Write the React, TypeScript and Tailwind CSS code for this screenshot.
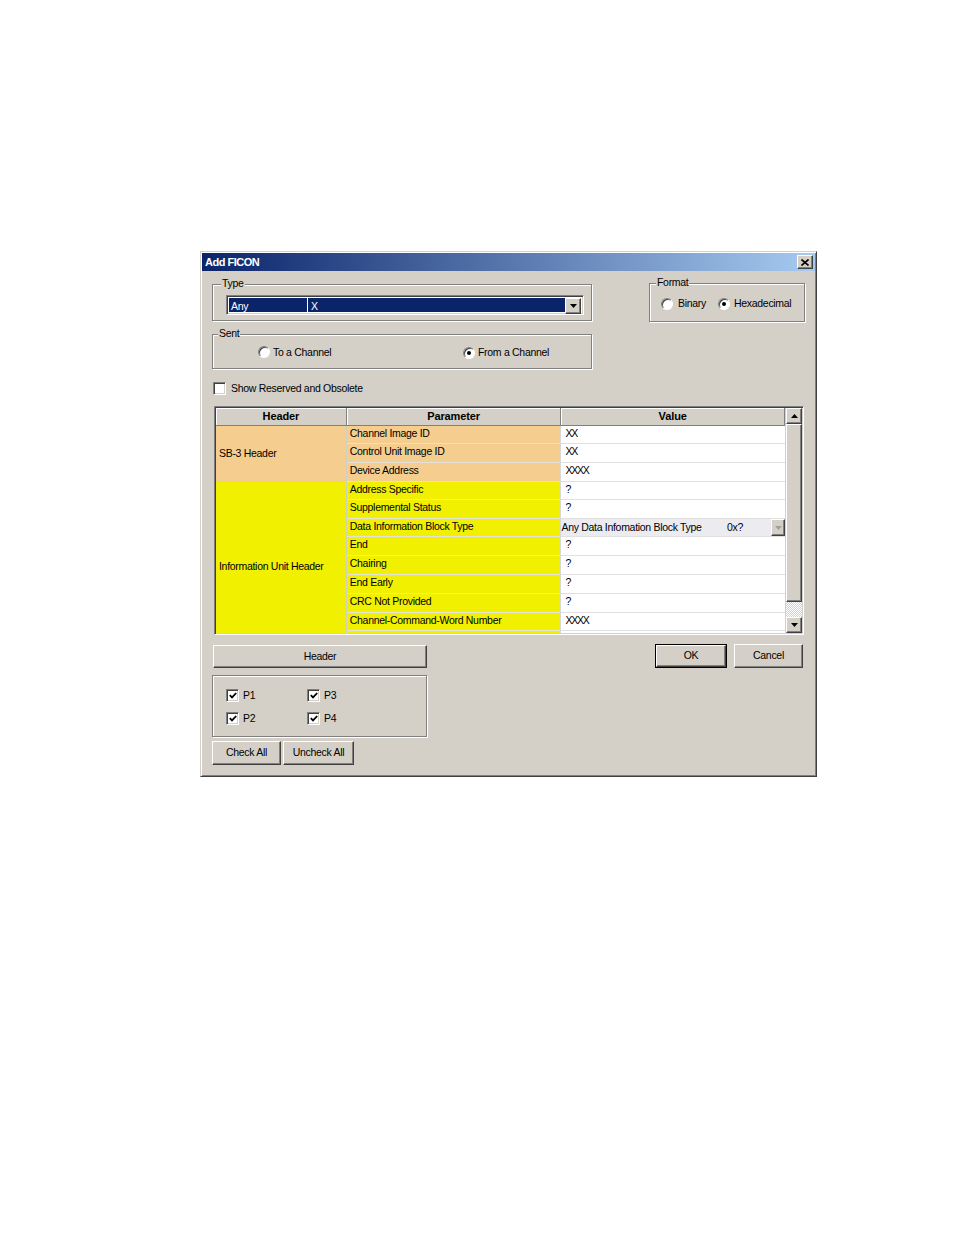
import React from "react";

const raised =
  "bg-[#d4d0c8] border border-t-white border-l-white border-r-[#404040] border-b-[#404040] shadow-[inset_-1px_-1px_0_#808080]";
const sunken =
  "border border-t-[#808080] border-l-[#808080] border-r-white border-b-white shadow-[inset_1px_1px_0_#404040,inset_-1px_-1px_0_#d4d0c8]";
const etched = "border border-[#808080] shadow-[inset_1px_1px_0_#fff,1px_1px_0_#fff]";

const ORANGE = "bg-[#f5ce8f]";
const YELLOW = "bg-[#f0f000]";

function DownArrow({ color = "#000" }: { color?: string }) {
  return (
    <svg width="7" height="4" viewBox="0 0 7 4">
      <polygon points="0,0 7,0 3.5,4" fill={color} />
    </svg>
  );
}
function UpArrow() {
  return (
    <svg width="7" height="4" viewBox="0 0 7 4">
      <polygon points="0,4 7,4 3.5,0" fill="#000" />
    </svg>
  );
}

function Check() {
  return (
    <svg width="8" height="7" viewBox="0 0 8 7">
      <polyline points="0.8,3.2 3,5.4 7.2,1" fill="none" stroke="#000" strokeWidth="1.8" />
    </svg>
  );
}

function CheckBox({ checked }: { checked?: boolean }) {
  return (
    <span className={`w-[13px] h-[13px] bg-white flex items-center justify-center shrink-0 ${sunken}`}>
      {checked ? <Check /> : null}
    </span>
  );
}

function Radio({ checked }: { checked?: boolean }) {
  return (
    <span
      className={`w-[12px] h-[12px] rounded-full bg-white flex items-center justify-center shrink-0 border border-t-[#808080] border-l-[#808080] border-r-white border-b-white shadow-[inset_1px_1px_0_#404040]`}
    >
      {checked ? <span className="w-[4px] h-[4px] rounded-full bg-black" /> : null}
    </span>
  );
}

function Legend({ children, className }: { children: React.ReactNode; className: string }) {
  return (
    <span className={`absolute -top-[9px] bg-[#d4d0c8] px-[1px] leading-[14px] ${className}`}>{children}</span>
  );
}

const rows: { p: string; v: string; h: string; c: string; combo?: boolean }[] = [
  { p: "Channel Image ID", v: "XX", h: "h-[18px]", c: ORANGE },
  { p: "Control Unit Image ID", v: "XX", h: "h-[19px]", c: ORANGE },
  { p: "Device Address", v: "XXXX", h: "h-[19px]", c: ORANGE },
  { p: "Address Specific", v: "?", h: "h-[18px]", c: YELLOW },
  { p: "Supplemental Status", v: "?", h: "h-[19px]", c: YELLOW },
  { p: "Data Information Block Type", v: "", h: "h-[18px]", c: YELLOW, combo: true },
  { p: "End", v: "?", h: "h-[19px]", c: YELLOW },
  { p: "Chairing", v: "?", h: "h-[19px]", c: YELLOW },
  { p: "End Early", v: "?", h: "h-[19px]", c: YELLOW },
  { p: "CRC Not Provided", v: "?", h: "h-[19px]", c: YELLOW },
  { p: "Channel-Command-Word Number", v: "XXXX", h: "h-[18px]", c: YELLOW },
];

export default function App() {
  return (
    <div className="w-[954px] h-[1235px] bg-white pt-[251px] pl-[200px] font-['Liberation_Sans',Arial,sans-serif] text-[10.5px] tracking-[-0.3px] text-black whitespace-nowrap">
      <div
        className="w-[617px] h-[526px] bg-[#d4d0c8] p-[1px] border border-t-[#d4d0c8] border-l-[#d4d0c8] border-r-[#404040] border-b-[#404040] shadow-[inset_1px_1px_0_#fff,inset_-1px_-1px_0_#808080] flex flex-col"
      >
        {/* Title bar */}
        <div className="h-[18px] flex items-center bg-[linear-gradient(to_right,#0a246a,#a6caf0)] pl-[3px] pr-[2px]">
          <span className="text-white font-bold text-[11px] tracking-[-0.5px] leading-none">Add FICON</span>
          <span className={`ml-auto w-[16px] h-[14px] flex items-center justify-center ${raised}`}>
            <svg width="8" height="7" viewBox="0 0 8 7">
              <path d="M0.5 0.5 L7.5 6.5 M7.5 0.5 L0.5 6.5" stroke="#000" strokeWidth="1.6" />
            </svg>
          </span>
        </div>

        {/* Top groups */}
        <div className="flex">
          <div className="ml-[10px] w-[380px] shrink-0">
            <div className={`relative mt-[13px] h-[37px] ${etched}`}>
              <Legend className="left-[8px]">Type</Legend>
              <div className={`ml-[13px] mt-[10px] w-[358px] h-[20px] bg-white flex p-[2px] ${sunken}`}>
                <div className="flex-1 flex bg-[#0a246a] text-white leading-[16px]">
                  <span className="w-[79px] pl-[2px] border-r border-white">Any</span>
                  <span className="pl-[3px]">X</span>
                </div>
                <span className={`w-[16px] h-[16px] flex items-center justify-center ${raised}`}>
                  <DownArrow />
                </span>
              </div>
            </div>
            <div className={`relative mt-[13px] h-[35px] ${etched}`}>
              <Legend className="left-[5px]">Sent</Legend>
              <div className="flex items-center mt-[9px]">
                <span className="ml-[45px] w-[205px] shrink-0 flex items-center gap-[3px]">
                  <Radio />
                  <span>To a Channel</span>
                </span>
                <span className="shrink-0 flex items-center gap-[3px] mt-[1px]">
                  <Radio checked />
                  <span>From a Channel</span>
                </span>
              </div>
            </div>
          </div>
          <div className={`relative ml-[57px] mt-[12px] w-[156px] h-[39px] shrink-0 ${etched}`}>
            <Legend className="left-[6px]">Format</Legend>
            <div className="flex items-center mt-[12px]">
              <span className="ml-[11px] w-[57px] shrink-0 flex items-center gap-[5px]">
                <Radio />
                <span>Binary</span>
              </span>
              <span className="shrink-0 flex items-center gap-[4px]">
                <Radio checked />
                <span>Hexadecimal</span>
              </span>
            </div>
          </div>
        </div>

        {/* Show reserved */}
        <div className="mt-[13px] ml-[11px] flex items-center gap-[5px] h-[13px]">
          <CheckBox />
          <span>Show Reserved and Obsolete</span>
        </div>

        {/* Table */}
        <div className={`mt-[11px] ml-[12px] w-[590px] h-[229px] bg-[#d4d0c8] flex p-[1px] ${sunken}`}>
          <div className="w-[571px] flex flex-col overflow-hidden">
            {/* header row */}
            <div className="h-[18px] flex font-bold text-[11px] tracking-[-0.1px]">
              <div className="w-[131px] flex items-center justify-center pb-[1px] border-r border-b border-[#808080] shadow-[inset_1px_1px_0_#fff]">
                Header
              </div>
              <div className="w-[215px] flex items-center justify-center pb-[1px] border-r border-b border-[#808080] shadow-[inset_1px_1px_0_#fff]">
                Parameter
              </div>
              <div className="w-[224px] flex items-center justify-center pb-[1px] border-r border-b border-[#808080] shadow-[inset_1px_1px_0_#fff]">
                Value
              </div>
            </div>
            {/* body */}
            <div className="flex flex-1 bg-white">
              <div className="w-[131px] flex flex-col border-r border-[#d0d0c0]">
                <div className={`h-[56px] flex items-center pl-[3px] ${ORANGE}`}>SB-3 Header</div>
                <div className={`flex-1 pl-[3px] pt-[77px] leading-[14px] ${YELLOW}`}>Information Unit Header</div>
              </div>
              <div className="w-[215px] flex flex-col border-r border-[#d8d8d8]">
                {rows.map((r) => (
                  <div key={r.p} className={`${r.h} ${r.c} flex items-center pl-[3px] pb-[2px] border-b border-[#e2e2d8]`}>
                    {r.p}
                  </div>
                ))}
                <div className={`flex-1 ${YELLOW}`} />
              </div>
              <div className="w-[224px] flex flex-col">
                {rows.map((r) =>
                  r.combo ? (
                    <div key={r.p} className={`${r.h} flex items-center bg-[#ecebf0] border-b border-[#e0e0e0]`}>
                      <span>Any Data Infomation Block Type</span>
                      <span className="ml-auto mr-[28px]">0x?</span>
                      <span className={`w-[14px] h-full flex items-center justify-center ${raised}`}>
                        <DownArrow color="#a0a0a0" />
                      </span>
                    </div>
                  ) : (
                    <div
                      key={r.p}
                      className={`${r.h} flex items-center pl-[4px] pb-[2px] border-b border-[#e0e0e0] ${r.v.startsWith("X") ? "tracking-[-1.2px]" : ""}`}
                    >
                      {r.v}
                    </div>
                  )
                )}
              </div>
            </div>
          </div>
          {/* scrollbar */}
          <div className="ml-[1px] w-[16px] flex flex-col">
            <span className={`h-[16px] flex items-center justify-center ${raised}`}>
              <UpArrow />
            </span>
            <span className={`h-[178px] ${raised}`} />
            <span className="flex-1 bg-[repeating-conic-gradient(#d4d0c8_0_25%,#fff_0_50%)] bg-[length:2px_2px]" />
            <span className={`h-[16px] flex items-center justify-center ${raised}`}>
              <DownArrow />
            </span>
          </div>
        </div>

        {/* Bottom */}
        <div className="flex items-start">
          <div className="ml-[10px] w-[215px] shrink-0 pt-[10px]">
            <button className={`ml-[1px] w-[214px] h-[23px] flex items-center justify-center ${raised}`}>Header</button>
            <div className={`mt-[7px] h-[62px] ${etched} pt-[13px] pl-[13px]`}>
              <div className="grid grid-cols-[81px_81px] gap-y-[10px] leading-[13px]">
                <span className="flex items-center gap-[4px]">
                  <CheckBox checked />
                  <span>P1</span>
                </span>
                <span className="flex items-center gap-[4px]">
                  <CheckBox checked />
                  <span>P3</span>
                </span>
                <span className="flex items-center gap-[4px]">
                  <CheckBox checked />
                  <span>P2</span>
                </span>
                <span className="flex items-center gap-[4px]">
                  <CheckBox checked />
                  <span>P4</span>
                </span>
              </div>
            </div>
            <div className="mt-[4px] flex gap-[2px]">
              <button className={`w-[69px] h-[24px] flex items-center justify-center ${raised}`}>Check All</button>
              <button className={`w-[71px] h-[24px] flex items-center justify-center ${raised}`}>Uncheck All</button>
            </div>
          </div>
          <div className="pt-[9px] ml-[228px] flex items-start gap-[7px]">
            <div className="border border-black">
              <button className={`w-[70px] h-[22px] flex items-center justify-center ${raised}`}>OK</button>
            </div>
            <button className={`w-[69px] h-[24px] flex items-center justify-center ${raised}`}>Cancel</button>
          </div>
        </div>
      </div>
    </div>
  );
}
